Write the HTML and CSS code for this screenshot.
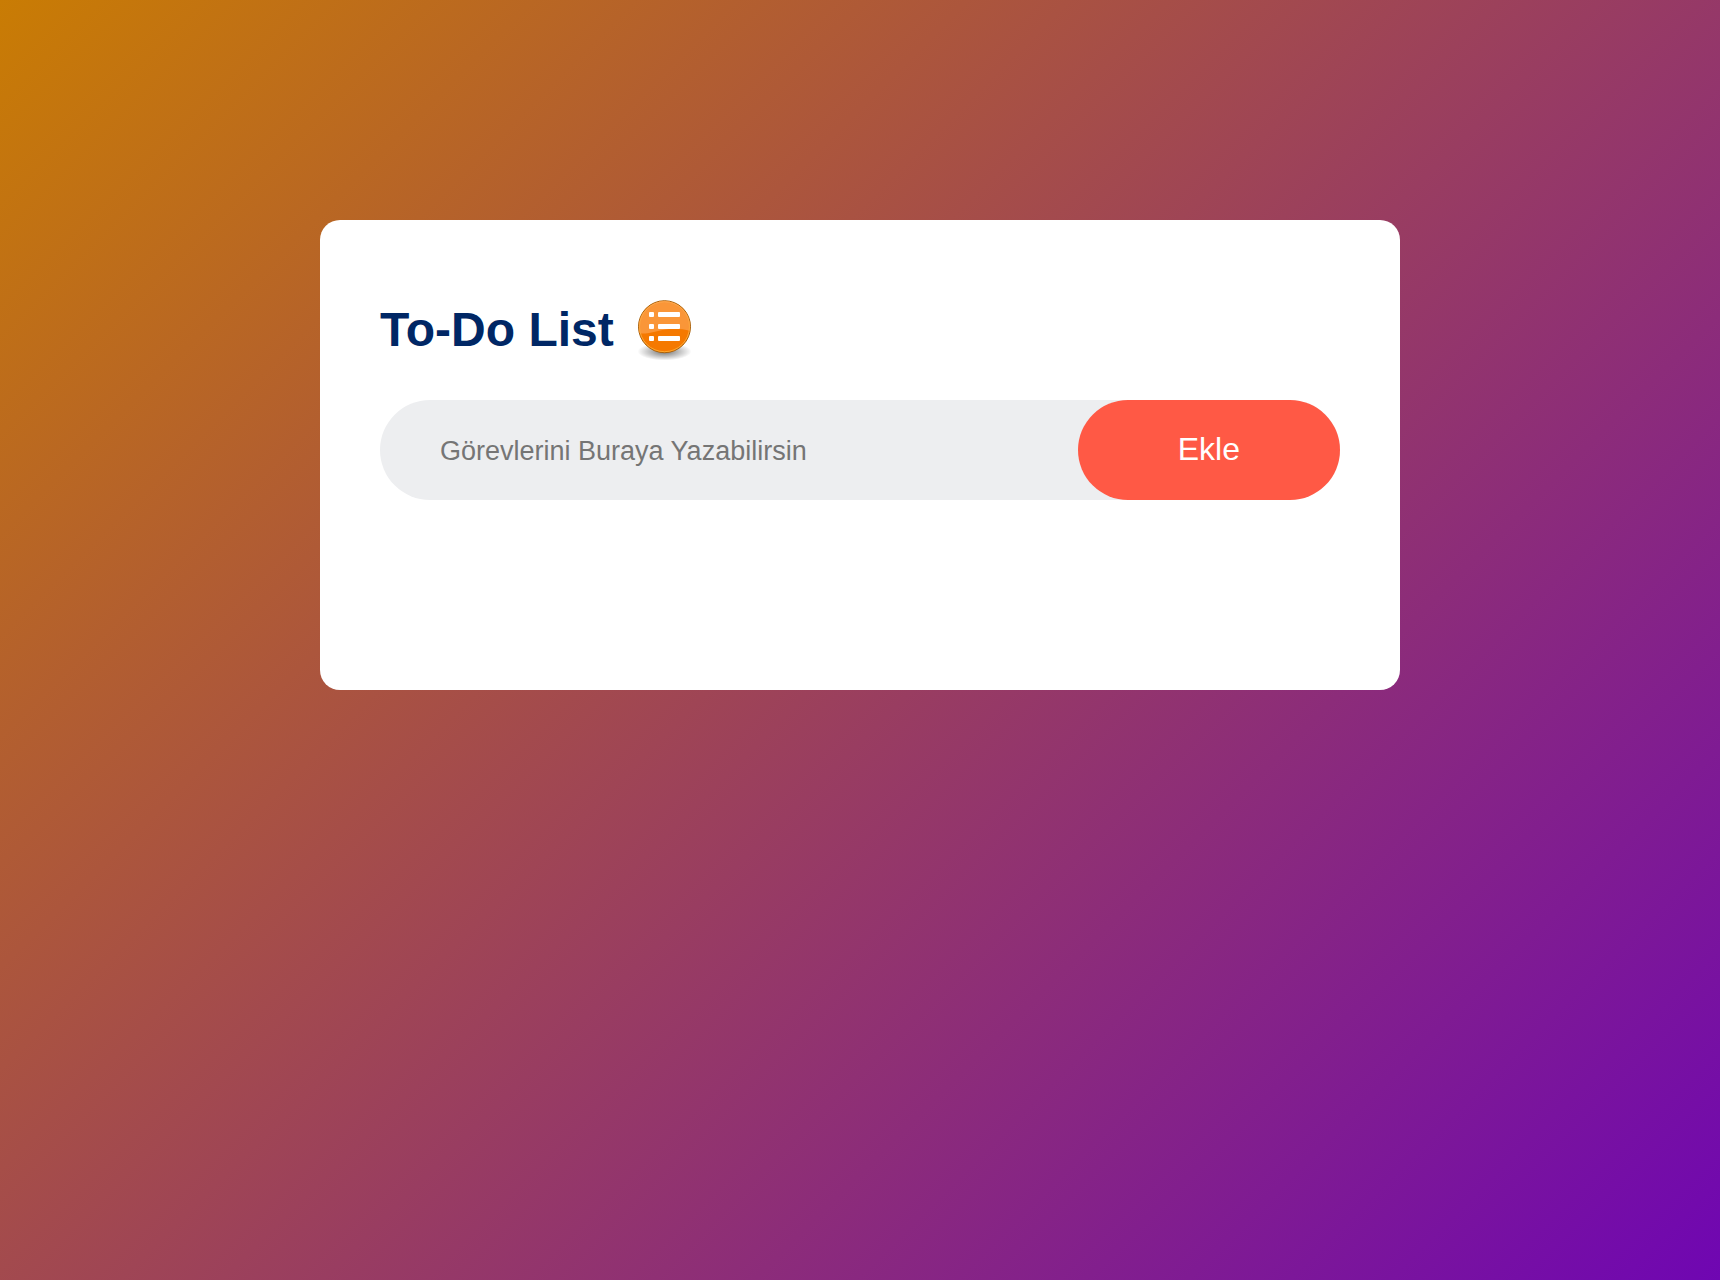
FILE: index.html
```html
<!DOCTYPE html>
<html lang="tr">
<head>
  <meta charset="UTF-8">
  <meta name="viewport" content="width=device-width, initial-scale=1">
  <title>To-Do List</title>
  <link rel="stylesheet" href="styles.css">
</head>
<body>
  <main class="todo-app">
    <h1 class="title">
      To-Do List
      <svg class="title-icon" viewBox="0 0 60 60" aria-hidden="true">
        <defs>
          <radialGradient id="shadow">
            <stop offset="0" stop-color="#000" stop-opacity=".55"/>
            <stop offset=".6" stop-color="#000" stop-opacity=".22"/>
            <stop offset="1" stop-color="#000" stop-opacity="0"/>
          </radialGradient>
          <linearGradient id="ring" x1="0" y1="0" x2="0" y2="1">
            <stop offset="0" stop-color="#fba850"/>
            <stop offset="1" stop-color="#fda62c"/>
          </linearGradient>
          <clipPath id="disc"><circle cx="30.5" cy="26.7" r="25.5"/></clipPath>
        </defs>
        <ellipse cx="30.5" cy="51.5" rx="27" ry="9" fill="url(#shadow)"/>
        <circle cx="30.5" cy="26.7" r="26" fill="#f57900" stroke="#a8620c"/>
        <path d="M0 0H60V32C52 29 43 28 35 29C25 30 18 34 5 33.500L0 33Z" fill="#fa9638" clip-path="url(#disc)"/>
        <circle cx="30.5" cy="26.7" r="25" fill="none" stroke="url(#ring)"/>
        <g fill="#fff">
          <rect x="15" y="12" width="5" height="5" rx="1"/>
          <rect x="24" y="12" width="22" height="5" rx="1"/>
          <rect x="15" y="24" width="5" height="5" rx="1"/>
          <rect x="24" y="24" width="22" height="5" rx="1"/>
          <rect x="15" y="36" width="5" height="5" rx="1"/>
          <rect x="24" y="36" width="22" height="5" rx="1"/>
        </g>
      </svg>
    </h1>
    <form class="row">
      <input class="task-input" type="text" placeholder="Görevlerini Buraya Yazabilirsin" aria-label="Görev">
      <button class="add-button" type="button">Ekle</button>
    </form>
    <ul class="task-list"></ul>
  </main>
</body>
</html>
```
FILE: styles.css
```css
* {
  box-sizing: border-box;
  margin: 0;
  padding: 0;
  font-family: "Liberation Sans", Arial, sans-serif;
}

body {
  min-height: 100vh;
  padding: 220px 20px 20px;
  background: linear-gradient(135deg, #c97c04, #6f06b2);
}

.todo-app {
  max-width: 1080px;
  margin: 0 auto;
  padding: 80px 60px 140px;
  border-radius: 20px;
  background: #fff;
}

.title {
  display: flex;
  align-items: center;
  gap: 20px;
  margin-bottom: 40px;
  color: #002765;
  font-size: 48px;
  line-height: 56px;
}

.title-icon {
  width: 60px;
  height: 60px;
}

.row {
  display: flex;
  align-items: center;
  border-radius: 50px;
  background: #edeef0;
}

.task-input {
  flex: 1;
  min-width: 0;
  padding: 22px 0 20px 60px;
  border: none;
  outline: none;
  background: transparent;
  font-size: 27px;
}

.task-input::placeholder {
  color: #757575;
}

.add-button {
  height: 100px;
  padding: 0 100px 2px;
  border: none;
  border-radius: 50px;
  background: #ff5945;
  color: #fff;
  font-size: 32px;
  cursor: pointer;
}

.task-list {
  min-height: 50px;
  list-style: none;
}
```
